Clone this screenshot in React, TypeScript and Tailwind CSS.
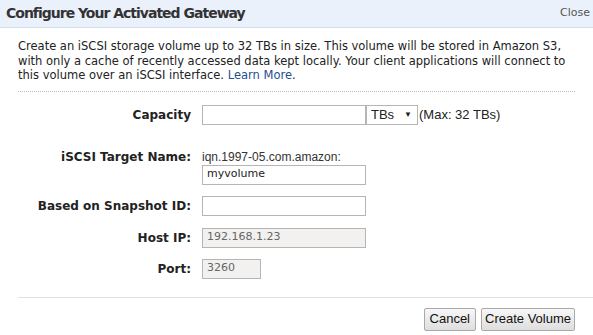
import React from 'react';

const Row: React.FC<{ label: string; children: React.ReactNode; className?: string }> = ({ label, children, className }) => (
  <div className={`grid grid-cols-[173px_1fr] gap-x-[11px] items-center ${className ?? ''}`}>
    <span className="text-right font-bold text-[12px] text-[#222]">{label}</span>
    <div className="flex items-center">{children}</div>
  </div>
);

const App: React.FC = () => {
  return (
    <div className="w-[593px] h-[335px] bg-white overflow-hidden text-[#333]" style={{ fontFamily: '"DejaVu Sans", Verdana, sans-serif' }}>
      <div className="h-[28px] bg-[#eaf1fb] border-b border-[#cfdff0] flex items-center justify-between pl-[6px] pr-[3px]">
        <h1 className="font-bold text-[14px] text-[#333] tracking-[-1px]">Configure Your Activated Gateway</h1>
        <span className="text-[11px] text-[#555]">Close</span>
      </div>

      <div className="px-[18px]">
        <p className="mt-[11px] text-[11.5px] leading-[14.5px] text-[#222] whitespace-nowrap">
          Create an iSCSI storage volume up to 32 TBs in size. This volume will be stored in Amazon S3,
          <br />
          with only a cache of recently accessed data kept locally. Your client applications will connect to
          <br />
          this volume over an iSCSI interface. <a className="text-[#1d4f91]">Learn More</a>.
        </p>
        <div className="mt-[8px] border-b border-dotted border-[#bbb]" />

        <div className="mt-[13px]">
          <Row label="Capacity">
            <div className="w-[164px] h-[20px] border border-[#b5b5b5] bg-white" />
            <div className="w-[52px] h-[20px] border border-[#b5b5b5] bg-white flex items-center justify-between pl-[4px] pr-[5px] text-[#222]" style={{ fontFamily: '"Liberation Sans", Arial, sans-serif' }}>
              <span className="text-[13px]">TBs</span>
              <span className="text-[8px]">▼</span>
            </div>
            <span className="ml-[1px] text-[13px] text-[#222]" style={{ fontFamily: '"Liberation Sans", Arial, sans-serif' }}>(Max: 32 TBs)</span>
          </Row>

          <div className="grid grid-cols-[173px_1fr] gap-x-[11px] mt-[25px]">
            <span className="text-right font-bold text-[12px] text-[#222] leading-[14px]">iSCSI Target Name:</span>
            <div className="flex flex-col">
              <span className="text-[12px] leading-[14px] text-[#333]" style={{ fontFamily: '"Liberation Sans", Arial, sans-serif' }}>iqn.1997-05.com.amazon:</span>
              <div className="mt-[1px] w-[164px] h-[20px] border border-[#b5b5b5] bg-white flex items-center px-[4px] text-[11px] text-[#222]">myvolume</div>
            </div>
          </div>

          <Row label="Based on Snapshot ID:" className="mt-[11px]">
            <div className="w-[164px] h-[20px] border border-[#b5b5b5] bg-white" />
          </Row>

          <Row label="Host IP:" className="mt-[12px]">
            <div className="w-[164px] h-[20px] border border-[#b5b5b5] bg-[#f2f1f0] flex items-center px-[4px] text-[11px] text-[#666]">192.168.1.23</div>
          </Row>

          <Row label="Port:" className="mt-[11px]">
            <div className="w-[59px] h-[20px] border border-[#b5b5b5] bg-[#f2f1f0] flex items-center px-[4px] text-[11px] text-[#666]">3260</div>
          </Row>
        </div>
      </div>

      <div className="mt-[18px] ml-[18px] border-t border-[#e3e3e3]" />
      <div className="flex justify-end gap-[5px] pr-[18px] pt-[10px]" style={{ fontFamily: '"Liberation Sans", Arial, sans-serif' }}>
        <button className="h-[23px] px-[5px] text-[13px] text-[#111] border border-[#a9a9a9] rounded-[2px] bg-gradient-to-b from-[#f7f7f7] to-[#dedede]">Cancel</button>
        <button className="h-[23px] px-[3px] text-[13px] text-[#111] border border-[#a9a9a9] rounded-[2px] bg-gradient-to-b from-[#f7f7f7] to-[#dedede]">Create Volume</button>
      </div>
    </div>
  );
};

export default App;
